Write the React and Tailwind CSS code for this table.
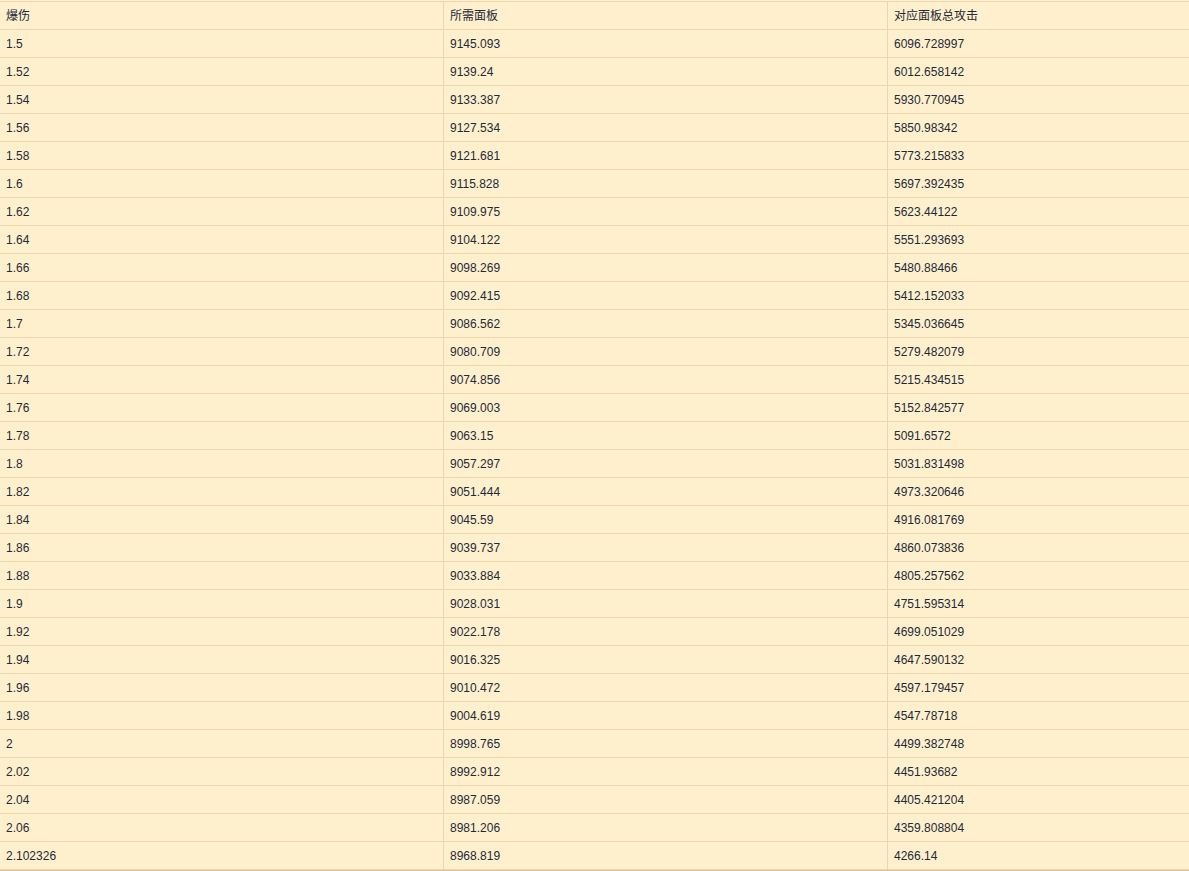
const rows = [
  ["1.5", "9145.093", "6096.728997"],
  ["1.52", "9139.24", "6012.658142"],
  ["1.54", "9133.387", "5930.770945"],
  ["1.56", "9127.534", "5850.98342"],
  ["1.58", "9121.681", "5773.215833"],
  ["1.6", "9115.828", "5697.392435"],
  ["1.62", "9109.975", "5623.44122"],
  ["1.64", "9104.122", "5551.293693"],
  ["1.66", "9098.269", "5480.88466"],
  ["1.68", "9092.415", "5412.152033"],
  ["1.7", "9086.562", "5345.036645"],
  ["1.72", "9080.709", "5279.482079"],
  ["1.74", "9074.856", "5215.434515"],
  ["1.76", "9069.003", "5152.842577"],
  ["1.78", "9063.15", "5091.6572"],
  ["1.8", "9057.297", "5031.831498"],
  ["1.82", "9051.444", "4973.320646"],
  ["1.84", "9045.59", "4916.081769"],
  ["1.86", "9039.737", "4860.073836"],
  ["1.88", "9033.884", "4805.257562"],
  ["1.9", "9028.031", "4751.595314"],
  ["1.92", "9022.178", "4699.051029"],
  ["1.94", "9016.325", "4647.590132"],
  ["1.96", "9010.472", "4597.179457"],
  ["1.98", "9004.619", "4547.78718"],
  ["2", "8998.765", "4499.382748"],
  ["2.02", "8992.912", "4451.93682"],
  ["2.04", "8987.059", "4405.421204"],
  ["2.06", "8981.206", "4359.808804"],
  ["2.102326", "8968.819", "4266.14"],
];

function Row({ cells }) {
  return (
    <div className="grid grid-cols-[443px_1px_443px_1px_1fr] h-[28px] border-b border-[#ead6b1]">
      <div className="pl-[6px] flex items-center">{cells[0]}</div>
      <div className="bg-[#ead6b1]" />
      <div className="pl-[6px] flex items-center">{cells[1]}</div>
      <div className="bg-[#ead6b1]" />
      <div className="pl-[6px] flex items-center">{cells[2]}</div>
    </div>
  );
}

export default function App() {
  return (
    <div
      className="w-[1189px] h-[871px] bg-[#fff0cd] text-[12px] text-[#1d2a3a] overflow-hidden"
      style={{ fontFamily: '"Liberation Sans", "Noto Sans CJK SC", sans-serif' }}
    >
      <div className="h-px" />
      <div className="border-t border-[#ead6b1]">
        <Row cells={["爆伤", "所需面板", "对应面板总攻击"]} />
        {rows.map((r, i) => (
          <Row key={i} cells={r} />
        ))}
      </div>
      <div className="h-px bg-[#dcc49e]" />
    </div>
  );
}
